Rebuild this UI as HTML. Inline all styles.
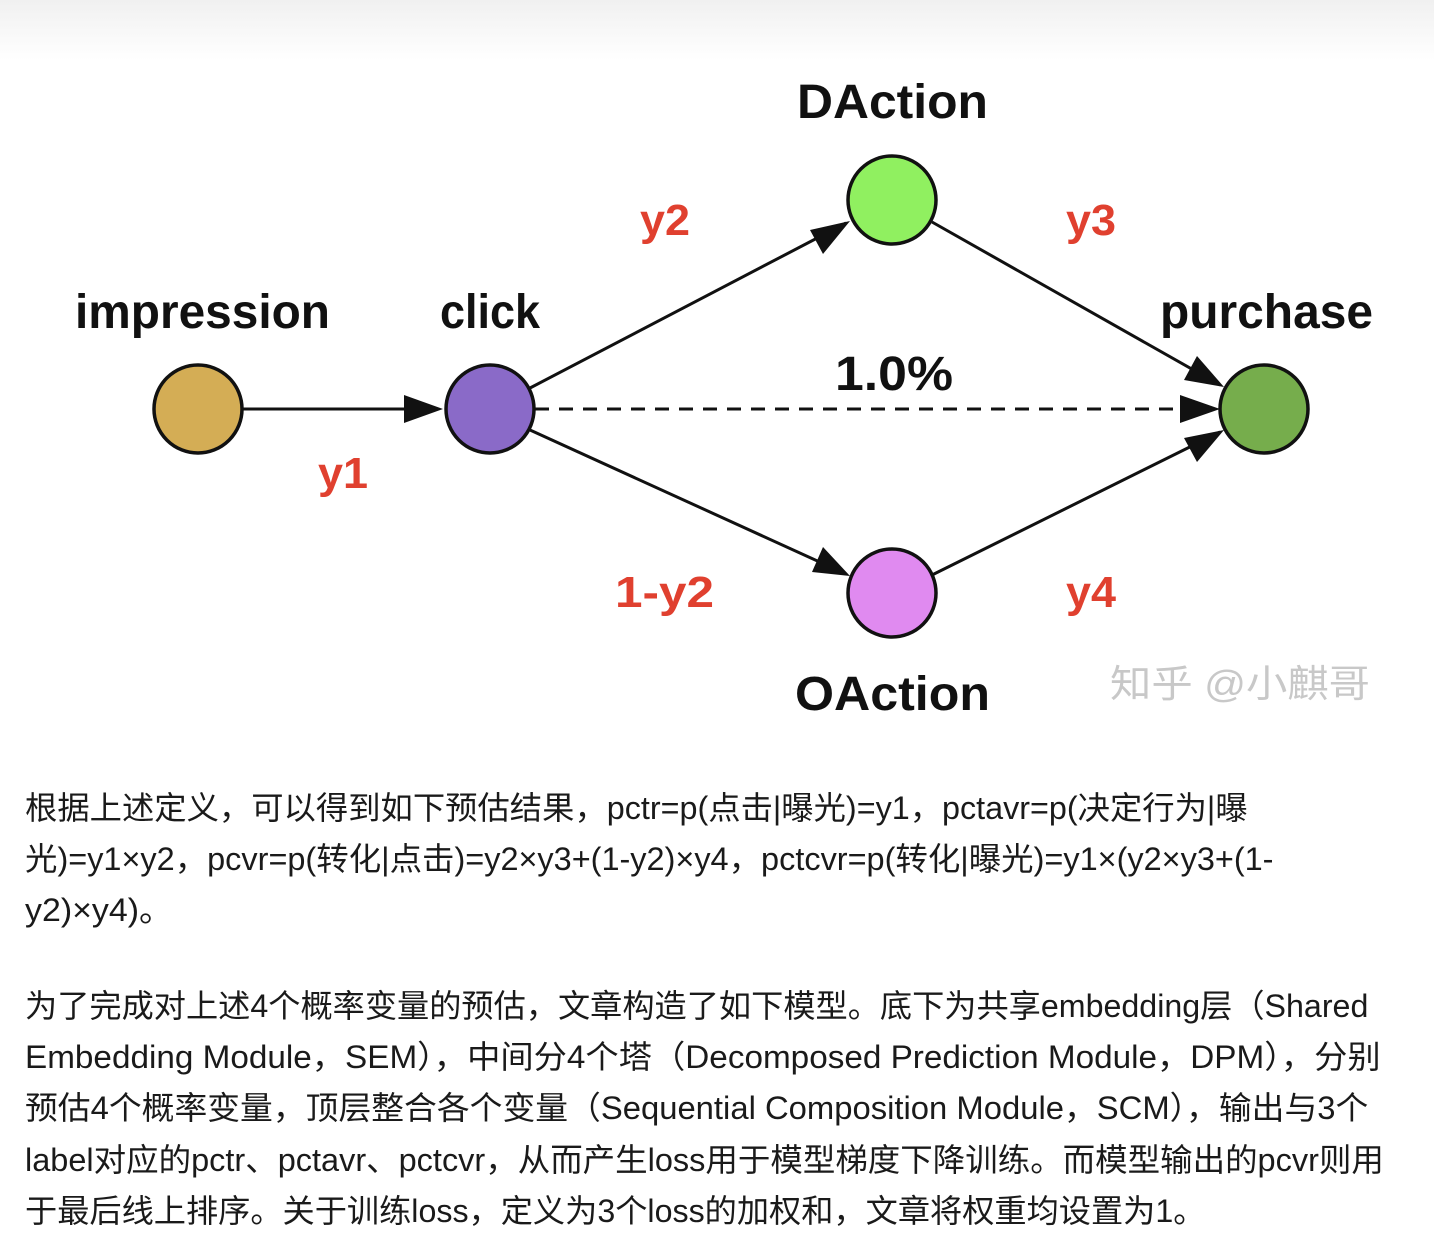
<!DOCTYPE html>
<html><head><meta charset="utf-8"><style>
html,body{margin:0;padding:0;background:#fff;}
body{width:1434px;height:1252px;position:relative;overflow:hidden;
background:linear-gradient(#f0f0f0 0px,#fff 60px,#fff 100%);}
svg{position:absolute;left:0;top:0;}
.t{position:absolute;left:25px;font-family:"Liberation Sans","Noto Sans CJK SC",sans-serif;font-size:32px;color:#1a1a1a;white-space:nowrap;line-height:51px;transform-origin:0 50%;}
</style></head><body>
<svg width="1434" height="740" viewBox="0 0 1434 740">
<g stroke="#111" stroke-width="3" fill="none">
<line x1="243" y1="409" x2="438" y2="409"/>
<line x1="530" y1="388" x2="846" y2="223"/>
<line x1="932" y1="222" x2="1220" y2="385"/>
<line x1="535" y1="409" x2="1214" y2="409" stroke-dasharray="14,10"/>
<line x1="530" y1="430" x2="846" y2="574"/>
<line x1="932" y1="575" x2="1220" y2="432"/>
</g>
<g fill="#111">
<path d="M443,409 L404,395 L404,423 z"/>
<path d="M850,221 L810,230 L823,254 z"/>
<path d="M1224,387 L1197,356 L1184,380 z"/>
<path d="M1220,409 L1180,395 L1180,423 z"/>
<path d="M850,576 L823,547 L812,572 z"/>
<path d="M1224,430 L1184,438 L1197,462 z"/>
</g>
<g stroke="#111" stroke-width="3.5">
<circle cx="198" cy="409" r="44" fill="#d4ad55"/>
<circle cx="490" cy="409" r="44" fill="#8a6ac8"/>
<circle cx="892" cy="200" r="44" fill="#90f060"/>
<circle cx="892" cy="593" r="44" fill="#e08af0"/>
<circle cx="1264" cy="409" r="44" fill="#76ad4c"/>
</g>
<g font-family="Liberation Sans,sans-serif" font-weight="bold" font-size="48" fill="#111">
<text x="75" y="328" textLength="255" lengthAdjust="spacingAndGlyphs">impression</text>
<text x="440" y="328" textLength="100" lengthAdjust="spacingAndGlyphs">click</text>
<text x="797" y="118" textLength="191" lengthAdjust="spacingAndGlyphs">DAction</text>
<text x="1160" y="328" textLength="213" lengthAdjust="spacingAndGlyphs">purchase</text>
<text x="795" y="710" textLength="195" lengthAdjust="spacingAndGlyphs">OAction</text>
<text x="835" y="390" textLength="118" lengthAdjust="spacingAndGlyphs">1.0%</text>
</g>
<g font-family="Liberation Sans,sans-serif" font-weight="bold" font-size="44" fill="#e0402f">
<text x="318" y="488" textLength="50" lengthAdjust="spacingAndGlyphs">y1</text>
<text x="640" y="235" textLength="50" lengthAdjust="spacingAndGlyphs">y2</text>
<text x="1066" y="235" textLength="50" lengthAdjust="spacingAndGlyphs">y3</text>
<text x="615" y="607" textLength="99" lengthAdjust="spacingAndGlyphs">1-y2</text>
<text x="1066" y="607" textLength="50" lengthAdjust="spacingAndGlyphs">y4</text>
</g>
<text x="1110" y="697" font-family="Liberation Sans,Noto Sans CJK SC,sans-serif" font-size="38" fill="#c8c8c8" textLength="260" lengthAdjust="spacingAndGlyphs">知乎 @小麒哥</text>
</svg>
<div class="t" style="top:783px;transform:scaleX(1.01)">根据上述定义，可以得到如下预估结果，pctr=p(点击|曝光)=y1，pctavr=p(决定行为|曝</div>
<div class="t" style="top:834px;transform:scaleX(1.014)">光)=y1×y2，pcvr=p(转化|点击)=y2×y3+(1-y2)×y4，pctcvr=p(转化|曝光)=y1×(y2×y3+(1-</div>
<div class="t" style="top:885px;transform:scaleX(1.06)">y2)×y4)。</div>
<div class="t" style="top:981px;transform:scaleX(1.006)">为了完成对上述4个概率变量的预估，文章构造了如下模型。底下为共享embedding层（Shared</div>
<div class="t" style="top:1032px;transform:scaleX(1.04)">Embedding Module，SEM），中间分4个塔（Decomposed Prediction Module，DPM），分别</div>
<div class="t" style="top:1083px;transform:scaleX(1.025)">预估4个概率变量，顶层整合各个变量（Sequential Composition Module，SCM），输出与3个</div>
<div class="t" style="top:1135px;transform:scaleX(1.015)">label对应的pctr、pctavr、pctcvr，从而产生loss用于模型梯度下降训练。而模型输出的pcvr则用</div>
<div class="t" style="top:1186px;transform:scaleX(1.006)">于最后线上排序。关于训练loss，定义为3个loss的加权和，文章将权重均设置为1。</div>
</body></html>
